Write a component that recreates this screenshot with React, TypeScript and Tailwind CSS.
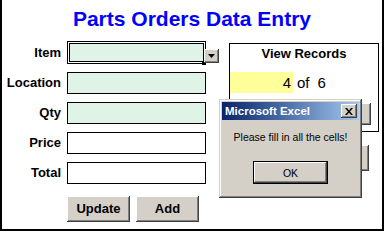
export default function App() {
  const btn3d =
    "bg-[#d4d0c8] shadow-[inset_-1px_-1px_0_#404040,inset_1px_1px_0_#ffffff,inset_-2px_-2px_0_#808080,inset_2px_2px_0_#d4d0c8]";
  const rows = ["Location", "Qty", "Price", "Total"];
  return (
    <div className="relative w-[384px] h-[231px] bg-white border-l-2 border-r-2 border-b-2 border-black overflow-hidden font-['Liberation_Sans',Arial,sans-serif] text-black">
      <div className="h-[31px] pt-[7px] text-center text-[21px] leading-[24px] font-bold text-[#0000ff]">
        Parts Orders Data Entry
      </div>
      <div className="mt-[10px] flex">
        <div className="flex flex-col gap-[8px]">
          <div className="flex items-center gap-[6px] h-[23px]">
            <div className="w-[59px] text-right text-[13px] font-bold leading-[16px]">Item</div>
            <div className="w-[139px] h-[23px] border border-black bg-white p-px">
              <div className="w-full h-full border border-black bg-[#dff4e7]" />
            </div>
          </div>
          {rows.map((r, i) => (
            <div key={r} className="flex items-center gap-[6px] h-[22px]">
              <div className="w-[59px] text-right text-[13px] font-bold leading-[16px]">{r}</div>
              <div
                className={
                  i < 2
                    ? "w-[139px] h-[22px] border border-black bg-[#dff4e7]"
                    : "w-[139px] h-[22px] border border-black bg-white"
                }
              />
            </div>
          ))}
          <div className="mt-[4px] ml-[65px] flex gap-[6px]">
            <div className={`w-[63px] h-[26px] flex items-center justify-center text-[13px] font-bold ${btn3d}`}>
              Update
            </div>
            <div className={`w-[63px] h-[26px] flex items-center justify-center text-[13px] font-bold ${btn3d}`}>
              Add
            </div>
          </div>
        </div>
        <div className="ml-[23px] mt-[2px] flex flex-col items-end">
          <div className="w-[150px] h-[89px] border border-black flex flex-col">
            <div className="pt-[2px] text-center text-[13px] leading-[16px] font-bold">View Records</div>
            <div className="mt-[10px] flex items-center">
              <div className="w-[63px] h-[21px] bg-[#ffff99] text-right pr-[2px] text-[15px] leading-[21px]">4</div>
              <span className="ml-[4px] text-[15px] leading-[21px]">of</span>
              <span className="ml-[8px] text-[15px] leading-[21px]">6</span>
            </div>
            <div className={`mt-[10px] self-end mr-[7px] w-[70px] h-[22px] ${btn3d}`} />
          </div>
          <div className={`mt-[13px] mr-[10px] w-[60px] h-[26px] ${btn3d}`} />
        </div>
      </div>

      {/* selection handle */}
      <div className="absolute left-[200px] top-[61px] w-[4px] h-[4px] bg-black" />
      {/* dropdown arrow */}
      <div className={`absolute left-[202px] top-[49px] w-[15px] h-[14px] flex items-center justify-center ${btn3d}`}>
        <svg width="7" height="4" viewBox="0 0 7 4">
          <polygon points="0,0 7,0 3.5,4" fill="#000" />
        </svg>
      </div>

      {/* dialog */}
      <div className="absolute left-[217px] top-[99px] w-[143px] h-[99px] p-[3px] bg-[#d4d0c8] shadow-[inset_-1px_-1px_0_#404040,inset_1px_1px_0_#d4d0c8,inset_-2px_-2px_0_#808080,inset_2px_2px_0_#ffffff] flex flex-col items-center">
        <div className="w-full h-[18px] bg-linear-to-r from-[#0a246a] to-[#a6caf0] flex items-center justify-between pl-[3px] pr-[2px]">
          <span className="text-white font-bold text-[11.5px] leading-[14px]">Microsoft Excel</span>
          <div className={`w-[16px] h-[14px] flex items-center justify-center ${btn3d}`}>
            <svg width="8" height="7" viewBox="0 0 8 7">
              <path d="M0 0h2l2 2.5L6 0h2L5 3.5 8 7H6L4 4.5 2 7H0l3-3.5z" fill="#000" />
            </svg>
          </div>
        </div>
        <div className="mt-[10px] text-[10.5px] leading-[14px] text-black">Please fill in all the cells!</div>
        <div className="mt-[17px] w-[75px] h-[23px] border border-black bg-[#d4d0c8] shadow-[inset_-1px_-1px_0_#404040,inset_1px_1px_0_#ffffff,inset_-2px_-2px_0_#808080] flex items-center justify-center text-[10.5px] leading-[14px]">
          OK
        </div>
      </div>
    </div>
  );
}
